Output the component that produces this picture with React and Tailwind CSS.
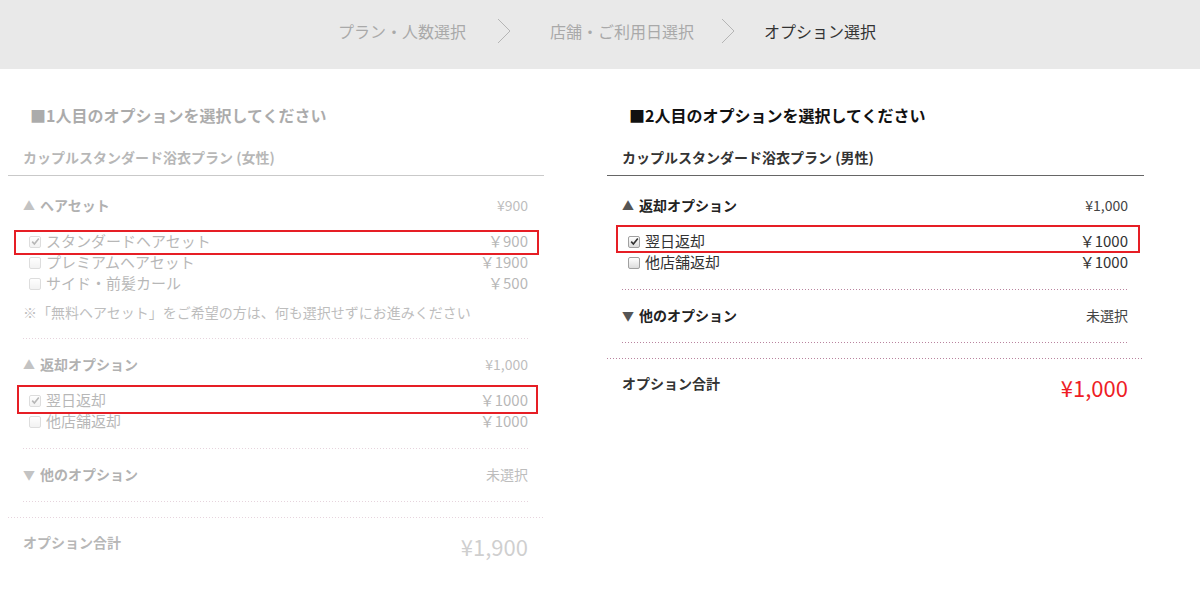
import React from 'react';

const font = { fontFamily: '"Noto Sans CJK JP", "Noto Sans", sans-serif' };

const Chevron = () => (
    <svg width="14" height="26" viewBox="0 0 14 26" className="shrink-0">
        <polyline points="1,1 13,13 1,25" fill="none" stroke="#b5b5b5" strokeWidth="1" />
    </svg>
);

const CheckBox = ({ checked }) => (
    <span className="inline-flex items-center justify-center w-[12px] h-[12px] border border-[#a0a0a0] rounded-[2px] bg-gradient-to-b from-white to-[#dcdcdc] shrink-0">
        {checked && (
            <svg width="9" height="9" viewBox="0 0 9 9">
                <path d="M1.2 4.6 L3.4 7 L7.8 1.6" fill="none" stroke="#333" strokeWidth="1.6" />
            </svg>
        )}
    </span>
);

const Dotted = () => (
    <div className="h-px bg-[linear-gradient(to_right,#b9849f_1px,transparent_1px)] bg-[length:3px_1px]" />
);

const panels = [
    {
        faded: true,
        heading: '■1人目のオプションを選択してください',
        plan: 'カップルスタンダード浴衣プラン (女性)',
        sections: [
            {
                open: true,
                title: 'ヘアセット',
                price: '¥900',
                items: [
                    { label: 'スタンダードヘアセット', price: '￥900', checked: true, box: 'absolute -left-[9px] -right-[11px] -top-[1px] -bottom-[3px] border-2 border-[#e61e25]' },
                    { label: 'プレミアムヘアセット', price: '￥1900' },
                    { label: 'サイド・前髪カール', price: '￥500' },
                ],
                note: '※「無料ヘアセット」をご希望の方は、何も選択せずにお進みください',
            },
            {
                open: true,
                title: '返却オプション',
                price: '¥1,000',
                items: [
                    { label: '翌日返却', price: '￥1000', checked: true, box: 'absolute -left-[6px] -right-[10px] -top-[5px] -bottom-[3px] border-2 border-[#e61e25]' },
                    { label: '他店舗返却', price: '￥1000' },
                ],
            },
            { open: false, title: '他のオプション', price: '未選択' },
        ],
        total: '¥1,900',
    },
    {
        faded: false,
        heading: '■2人目のオプションを選択してください',
        plan: 'カップルスタンダード浴衣プラン (男性)',
        sections: [
            {
                open: true,
                title: '返却オプション',
                price: '¥1,000',
                items: [
                    { label: '翌日返却', price: '￥1000', checked: true, box: 'absolute -left-[6px] -right-[12px] -top-[6px] -bottom-[1px] border-2 border-[#e61e25]' },
                    { label: '他店舗返却', price: '￥1000' },
                ],
            },
            { open: false, title: '他のオプション', price: '未選択' },
        ],
        total: '¥1,000',
    },
];

const Panel = ({ faded, heading, plan, sections, total, width }) => {
    // left panel is shown greyed out, the red marks stay bright
    const f = faded ? 'opacity-35' : '';

    return (
        <div className={`${width} shrink-0`}>
            <h2 className={`${f} mt-[34px] px-[22px] text-[16px] leading-[24px] font-bold text-[#111]`}>{heading}</h2>
            <div className={`${f} mt-[20px] px-[15px] pb-[8px] text-[14px] leading-[20px] font-bold text-[#333] border-b border-[#666]`}>
                {plan}
            </div>

            {sections.map((s, i) => (
                <div key={i} className="pl-[15px] pr-[16px]">
                    <div className={`${f} ${i === 0 ? 'mt-[19px]' : 'mt-[15px]'} flex justify-between text-[14px] leading-[20px]`}>
                        <span className="font-bold text-[#222]">
                            <span className="text-[#555] text-[12px] mr-[5px]">{s.open ? '▲' : '▼'}</span>
                            {s.title}
                        </span>
                        <span className="text-[#444]">{s.price}</span>
                    </div>

                    {s.open && (
                        <div className="mt-[15px]">
                            {s.items.map((it, j) => (
                                <div key={j} className="relative">
                                    <div className={`${f} flex items-center justify-between h-[21px] text-[15px] text-[#333]`}>
                                        <span className="flex items-center">
                                            <span className="ml-[6px] mr-[5px] flex"><CheckBox checked={it.checked} /></span>
                                            {it.label}
                                        </span>
                                        <span>{it.price}</span>
                                    </div>
                                    {it.box && <div className={it.box} />}
                                </div>
                            ))}
                        </div>
                    )}

                    {s.note && (
                        <p className={`${f} mt-[8px] text-[14px] leading-[20px] text-[#444]`}>{s.note}</p>
                    )}

                    <div className={`${f} ${s.note ? 'mt-[16px]' : 'mt-[16px]'}`}>
                        <Dotted />
                    </div>
                </div>
            ))}

            <div className={`${f} mt-[15px]`}>
                <Dotted />
            </div>

            <div className={`${f} mt-[14px] pl-[15px] pr-[16px] flex justify-between items-start`}>
                <span className="text-[14px] leading-[20px] font-bold text-[#333]">オプション合計</span>
                <span className={`text-[22px] leading-[28px] ${faded ? 'text-[#777]' : 'text-[#ee1c25]'}`}>{total}</span>
            </div>
        </div>
    );
};

const App = () => {
    return (
        <div className="min-h-screen bg-white" style={font}>
            {/* Steps */}
            <div className="h-[69px] bg-[#e9e9e9] flex justify-center pl-[14px] pt-[18px]">
                <div className="flex items-start text-[16px] leading-[26px]">
                    <span className="text-[#a9a9a9]">プラン・人数選択</span>
                    <span className="ml-[31px] flex"><Chevron /></span>
                    <span className="ml-[39px] text-[#a9a9a9]">店舗・ご利用日選択</span>
                    <span className="ml-[27px] flex"><Chevron /></span>
                    <span className="ml-[29px] text-[#333]">オプション選択</span>
                </div>
            </div>

            <div className="flex items-start pl-[8px] gap-[63px]">
                <Panel {...panels[0]} width="w-[536px]" />
                <Panel {...panels[1]} width="w-[537px]" />
            </div>
        </div>
    );
};

export default App;
